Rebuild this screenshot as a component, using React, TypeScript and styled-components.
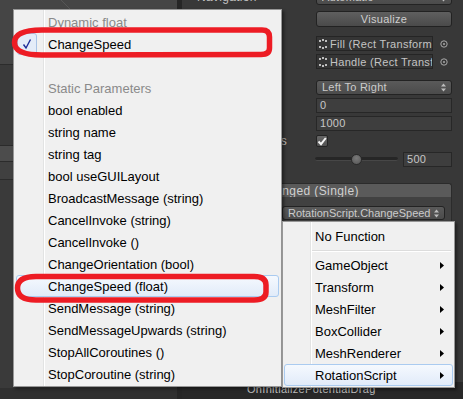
import React from 'react';
import styled, { createGlobalStyle } from 'styled-components';

const GlobalStyle = createGlobalStyle`
  html, body {
    margin: 0;
    padding: 0;
    background: #383838;
  }
  body {
    width: 463px;
    height: 399px;
    overflow: hidden;
  }
`;

const Screen = styled.div`
  position: relative;
  width: 463px;
  height: 399px;
  overflow: hidden;
  display: flex;
  font-family: "Liberation Sans", Arial, sans-serif;
`;

/* ---------- left pane (scene + hierarchy) ---------- */

const ScenePane = styled.div`
  width: 177px;
  display: flex;
  flex-direction: column;
  background: #3a3a3a;
`;

const SceneView = styled.div`
  height: 64px;
  flex-shrink: 0;
  background:
    repeating-linear-gradient(45deg, transparent 0 88px, rgba(255, 255, 255, 0.09) 88px 89px),
    #454545;
  border-bottom: 1px solid #2c2c2c;
`;

const PaneRow = styled.div<{ $h: number; $shade: string }>`
  height: ${p => p.$h}px;
  flex-shrink: 0;
  background: ${p => p.$shade};
  border-bottom: 1px solid #2b2b2b;
`;

const PaneFooter = styled.div`
  margin-top: auto;
  height: 11px;
  background: #303030;
`;

const Divider = styled.div`
  width: 5px;
  background: #262626;
`;

/* ---------- inspector ---------- */

const Inspector = styled.div`
  flex: 1;
  display: flex;
  flex-direction: column;
  background: #383838;
  color: #c0c0c0;
`;

const InspectorBody = styled.div`
  display: flex;
  flex-direction: column;
  padding: 0 11px 0 15px;
`;

const Row = styled.div<{ $mt: number; $h: number }>`
  display: grid;
  grid-template-columns: 119px 1fr;
  align-items: center;
  margin-top: ${p => p.$mt}px;
  height: ${p => p.$h}px;
`;

const Label = styled.div`
  font-size: 12px;
  letter-spacing: 0.3px;
  white-space: nowrap;
`;

const Control = styled.div`
  display: flex;
  align-items: center;
  gap: 5px;
  min-width: 0;
`;

const Button = styled.div`
  flex: 1;
  height: 16px;
  box-sizing: border-box;
  border: 1px solid #222;
  border-radius: 3px;
  background: linear-gradient(#5f5f5f, #4a4a4a);
  font-size: 11px;
  letter-spacing: 0.3px;
  line-height: 14px;
  text-align: center;
  color: #cfcfcf;
`;

const Dropdown = styled.div<{ $h?: number }>`
  flex: 1;
  min-width: 0;
  height: ${p => p.$h ?? 16}px;
  box-sizing: border-box;
  display: flex;
  align-items: center;
  gap: 3px;
  padding: 0 5px;
  border: 1px solid #232323;
  border-radius: 3px;
  background: linear-gradient(#5a5a5a, #4b4b4b);
  font-size: 11px;
  color: #cbcbcb;
  white-space: nowrap;
  overflow: hidden;
`;

const DropdownText = styled.span<{ $spacing?: number }>`
  flex: 1;
  min-width: 0;
  overflow: hidden;
  letter-spacing: ${p => p.$spacing ?? 0.25}px;
`;

const TextField = styled.div<{ $w?: number }>`
  ${p => (p.$w ? `width: ${p.$w}px;` : 'flex: 1;')}
  height: 15px;
  box-sizing: border-box;
  padding: 0 3px;
  border: 1px solid #272727;
  background: #3e3e3e;
  font-size: 11px;
  letter-spacing: 0.3px;
  line-height: 13px;
  color: #c6c6c6;
`;

const ObjectField = styled.div`
  flex: 1;
  min-width: 0;
  height: 15px;
  box-sizing: border-box;
  display: flex;
  align-items: center;
  gap: 1px;
  padding: 0 2px;
  border: 1px solid #252525;
  background: #353535;
  font-size: 11px;
  letter-spacing: 0.3px;
  color: #c4c4c4;
  white-space: nowrap;
  overflow: hidden;
`;

const TargetIcon = styled.svg`
  flex-shrink: 0;
  margin: 0 4px 0 2px;
`;

const Checkbox = styled.div`
  width: 12px;
  height: 12px;
  box-sizing: border-box;
  border: 1px solid #242424;
  border-radius: 2px;
  background: linear-gradient(#666, #525252);
  display: flex;
  align-items: center;
  justify-content: center;
`;

const SliderTrack = styled.div`
  position: relative;
  flex: 1;
  height: 3px;
  margin-left: -1px;
  border-radius: 2px;
  background: #262626;
  border-bottom: 1px solid #474747;
`;

const SliderKnob = styled.div`
  position: absolute;
  top: 50%;
  width: 11px;
  height: 11px;
  margin: -5px 0 0 -5.5px;
  box-sizing: border-box;
  border-radius: 50%;
  border: 1px solid #2a2a2a;
  background: radial-gradient(circle at 50% 35%, #7a7a7a, #555);
`;

const EventHeader = styled.div`
  margin-top: 16px;
  height: 14px;
  box-sizing: border-box;
  padding-left: 5px;
  border: 1px solid #2b2b2b;
  border-bottom: none;
  border-radius: 3px 3px 0 0;
  background: #5a5a5a;
  font-size: 12px;
  letter-spacing: 0.4px;
  line-height: 14px;
  color: #d0d0d0;
  white-space: nowrap;
`;

const EventBody = styled.div`
  height: 60px;
  box-sizing: border-box;
  display: grid;
  grid-template-columns: 1fr 163px;
  grid-auto-rows: 14px;
  column-gap: 4px;
  row-gap: 4px;
  padding: 9px 6px 0 4px;
  border: 1px solid #2b2b2b;
  border-top: none;
  background: #414141;
`;

const BottomStrip = styled.div`
  margin-top: auto;
  height: 17px;
  padding-left: 65px;
  background: #282828;
  font-size: 11px;
  letter-spacing: 0.3px;
  line-height: 15px;
  color: #c0c0c0;
`;

/* ---------- popup menus ---------- */

const Popup = styled.div<{ $left: number; $top: number; $width: number; $pad: string; $col: number }>`
  position: absolute;
  left: ${p => p.$left}px;
  top: ${p => p.$top}px;
  width: ${p => p.$width}px;
  box-sizing: border-box;
  padding: ${p => p.$pad};
  border: 1px solid #979797;
  background:
    linear-gradient(
      to right,
      transparent ${p => p.$col}px,
      #e2e3e3 ${p => p.$col}px ${p => p.$col + 1}px,
      #ffffff ${p => p.$col + 1}px ${p => p.$col + 2}px,
      transparent ${p => p.$col + 2}px
    ),
    #f0f0f0;
  box-shadow: 2px 2px 3px rgba(0, 0, 0, 0.45);
  font-family: "Liberation Sans", Arial, sans-serif;
  font-size: 13px;
`;

const MenuItem = styled.div<{ $header?: boolean; $hot?: boolean; $indent: number }>`
  position: relative;
  height: 22px;
  box-sizing: border-box;
  display: flex;
  align-items: center;
  justify-content: space-between;
  padding: 0 8px 0 ${p => p.$indent}px;
  border: 1px solid ${p => (p.$hot ? '#aacbf0' : 'transparent')};
  border-radius: 3px;
  background: ${p => (p.$hot ? 'linear-gradient(#f5f9fe, #e1ebf9)' : 'transparent')};
  color: ${p => (p.$header ? '#8a8a8a' : '#000')};
  white-space: nowrap;
`;

const CheckBox = styled.div`
  position: absolute;
  left: 0;
  top: -1px;
  width: 20px;
  height: 22px;
  box-sizing: border-box;
  border: 1px solid #a9c3e6;
  border-radius: 3px;
  background: #e4ecf8;
  display: flex;
  align-items: center;
  justify-content: center;
`;

const MenuSeparator = styled.div`
  margin: 3px 2px 2px 28px;
  border-top: 1px solid #dcdcdc;
  border-bottom: 1px solid #ffffff;
`;

const Overlay = styled.svg`
  position: absolute;
  left: 0;
  top: 0;
  pointer-events: none;

  path {
    fill: none;
    stroke: #ed1c24;
    stroke-width: 5.5;
    stroke-linejoin: round;
  }
`;

/* ---------- small drawings ---------- */

const UpDown = () => (
  <svg width="5" height="9" viewBox="0 0 5 9" style={{ flexShrink: 0 }}>
    <polygon points="0,3.5 2.5,0.5 5,3.5" fill="#bdbdbd" />
    <polygon points="0,5.5 2.5,8.5 5,5.5" fill="#bdbdbd" />
  </svg>
);

const RectIcon = () => (
  <svg width="10" height="10" viewBox="0 0 10 10" style={{ flexShrink: 0 }}>
    <g fill="#bdbdbd">
      <rect x="0" y="1" width="2" height="2" />
      <rect x="3" y="0" width="2" height="2" />
      <rect x="6" y="1" width="2" height="2" />
      <rect x="0" y="7" width="2" height="2" />
      <rect x="3" y="8" width="2" height="2" />
      <rect x="6" y="7" width="2" height="2" />
    </g>
  </svg>
);

const Target = () => (
  <TargetIcon width="8" height="8" viewBox="0 0 8 8">
    <circle cx="4" cy="4" r="3.2" fill="none" stroke="#a8a8a8" strokeWidth="1" />
    <circle cx="4" cy="4" r="1" fill="#a8a8a8" />
  </TargetIcon>
);

const WhiteCheck = () => (
  <svg width="10" height="9" viewBox="0 0 10 9">
    <polyline points="1.5,4.5 4,7.2 8.8,1" fill="none" stroke="#f4f4f4" strokeWidth="2" />
  </svg>
);

const BlueCheck = () => (
  <svg width="10" height="12" viewBox="0 0 10 12">
    <polyline points="1.5,6.5 4,10 8.5,1.5" fill="none" stroke="#1c2c98" strokeWidth="1.4" />
  </svg>
);

const SubArrow = () => (
  <svg width="4" height="7" viewBox="0 0 4 7">
    <polygon points="0,0 4,3.5 0,7" fill="#000" />
  </svg>
);

/* ---------- data ---------- */

const staticParams = [
  'bool enabled',
  'string name',
  'string tag',
  'bool useGUILayout',
  'BroadcastMessage (string)',
  'CancelInvoke (string)',
  'CancelInvoke ()',
  'ChangeOrientation (bool)',
  'ChangeSpeed (float)',
  'SendMessage (string)',
  'SendMessageUpwards (string)',
  'StopAllCoroutines ()',
  'StopCoroutine (string)',
];

const components = ['GameObject', 'Transform', 'MeshFilter', 'BoxCollider', 'MeshRenderer', 'RotationScript'];

const slider = { min: 0, max: 1000, value: 500 };

export default function App() {
  const knobPos = ((slider.value - slider.min) / (slider.max - slider.min)) * 100;

  return (
    <Screen>
      <GlobalStyle />

      <ScenePane>
        <SceneView />
        <PaneRow $h={80} $shade="#3a3a3a" />
        <PaneRow $h={15} $shade="#4c4c4c" />
        <PaneRow $h={17} $shade="#404040" />
        <PaneFooter />
      </ScenePane>

      <Divider />

      <Inspector>
        <InspectorBody>
          <Row $mt={-11} $h={16}>
            <Label>Navigation</Label>
            <Control>
              <Dropdown>
                <DropdownText>Automatic</DropdownText>
                <UpDown />
              </Dropdown>
            </Control>
          </Row>

          <Row $mt={6} $h={16}>
            <Label />
            <Control>
              <Button>Visualize</Button>
            </Control>
          </Row>

          <Row $mt={9} $h={15}>
            <Label>Fill Rect</Label>
            <Control>
              <ObjectField>
                <RectIcon />
                <span>Fill (Rect Transform)</span>
              </ObjectField>
              <Target />
            </Control>
          </Row>

          <Row $mt={3} $h={15}>
            <Label>Handle Rect</Label>
            <Control>
              <ObjectField>
                <RectIcon />
                <span>Handle (Rect Transform)</span>
              </ObjectField>
              <Target />
            </Control>
          </Row>

          <Row $mt={10} $h={16}>
            <Label>Direction</Label>
            <Control>
              <Dropdown $h={15}>
                <DropdownText>Left To Right</DropdownText>
                <UpDown />
              </Dropdown>
            </Control>
          </Row>

          <Row $mt={2} $h={16}>
            <Label>Min Value</Label>
            <Control>
              <TextField>{slider.min}</TextField>
            </Control>
          </Row>

          <Row $mt={2} $h={16}>
            <Label>Max Value</Label>
            <Control>
              <TextField>{slider.max}</TextField>
            </Control>
          </Row>

          <Row $mt={2} $h={16}>
            <Label>Whole Numbers</Label>
            <Control>
              <Checkbox>
                <WhiteCheck />
              </Checkbox>
            </Control>
          </Row>

          <Row $mt={2} $h={16}>
            <Label>Value</Label>
            <Control>
              <SliderTrack>
                <SliderKnob style={{ left: `${knobPos}%` }} />
              </SliderTrack>
              <TextField $w={49}>{slider.value}</TextField>
            </Control>
          </Row>

          <EventHeader>On Value Changed (Single)</EventHeader>
          <EventBody>
            <Dropdown $h={14}>
              <DropdownText>Runtime Only</DropdownText>
              <UpDown />
            </Dropdown>
            <Dropdown $h={14}>
              <DropdownText $spacing={0}>RotationScript.ChangeSpeed</DropdownText>
              <UpDown />
            </Dropdown>
            <ObjectField>
              <span>Cube (RotationScript)</span>
            </ObjectField>
          </EventBody>
        </InspectorBody>

        <BottomStrip>OnInitializePotentialDrag</BottomStrip>
      </Inspector>

      <Popup $left={13} $top={9} $width={269} $pad="1px 2px" $col={29}>
        <MenuItem $indent={31} $header>Dynamic float</MenuItem>
        <MenuItem $indent={31}>
          <CheckBox>
            <BlueCheck />
          </CheckBox>
          ChangeSpeed
        </MenuItem>
        <MenuItem $indent={31} />
        <MenuItem $indent={31} $header>Static Parameters</MenuItem>
        {staticParams.map(name => (
          <MenuItem key={name} $indent={31} $hot={name === 'ChangeSpeed (float)'}>
            {name}
          </MenuItem>
        ))}
      </Popup>

      <Popup $left={282} $top={221} $width={173} $pad="3px 1px 1px" $col={27}>
        <MenuItem $indent={30}>No Function</MenuItem>
        <MenuSeparator />
        {components.map(name => (
          <MenuItem key={name} $indent={30} $hot={name === 'RotationScript'}>
            <span>{name}</span>
            <SubArrow />
          </MenuItem>
        ))}
      </Popup>

      <Overlay width={463} height={399} viewBox="0 0 463 399">
        <path d="M42 30 L262 30 Q269.5 30 269.5 37 L269.5 48 Q269.5 54.5 261 54.5 L42 55 Q14.5 55 14.5 42.5 Q14.5 30 42 30 Z" />
        <path d="M36 276.5 L254 276.5 Q266 276.5 266 285 L266 292 Q266 300 254 300 L36 300 Q17.5 300 17.5 288 Q17.5 276.5 36 276.5 Z" />
      </Overlay>
    </Screen>
  );
}
